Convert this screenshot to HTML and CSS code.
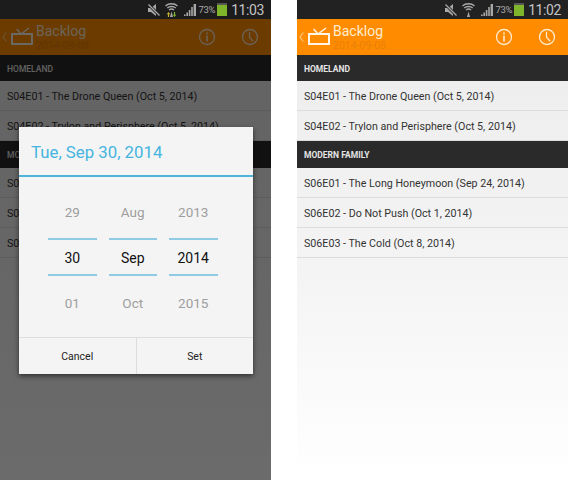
FILE: index.html
```html
<!DOCTYPE html>
<html lang="en">
<head>
<meta charset="utf-8">
<title>Backlog</title>
<link rel="stylesheet" href="styles.css">
</head>
<body>
<svg class="defs" width="0" height="0" aria-hidden="true">
  <symbol id="mute" viewBox="0 0 12 12"><path d="M0 4h3l5-4v12L3 8H0z" fill="currentColor"/><path d="M0.500 0.500L11.500 11.500" stroke="#222" stroke-width="3"/><path d="M0.500 0.500L11.500 11.500" stroke="currentColor" stroke-width="1.200"/></symbol>
  <symbol id="wifi" viewBox="0 0 13 15"><path d="M0.500 4C3.500 1 9.500 1 12.500 4M2.300 6C4.500 4 8.500 4 10.700 6M4 8C5.500 6.800 7.500 6.800 9 8" fill="none" stroke="currentColor" stroke-width="1.300"/><path d="M6.500 9.500l1.500 5.500H5z" fill="currentColor"/></symbol>
  <symbol id="wifi-on" viewBox="0 0 13 15"><path d="M0.500 4C3.500 1 9.500 1 12.500 4M2.300 6C4.500 4 8.500 4 10.700 6M4 8C5.500 6.800 7.500 6.800 9 8" fill="none" stroke="currentColor" stroke-width="1.300"/><path d="M6.500 9.500l1.500 5.500H5z" fill="currentColor"/><path d="M3.500 10l-1.800 2.200h1.200V15h1.200v-2.800h1.200z" fill="#c9b52a"/><path d="M9.500 15l1.800-2.200h-1.200V10H8.900v2.800H7.700z" fill="#7fb52a"/></symbol>
  <symbol id="signal" viewBox="0 0 12 12"><path d="M0 12h1.600v-1.500H0zM2.400 12H4V8.500H2.400zM4.800 12h1.600V6H4.800zM7.200 12h1.600V3H7.200zM9.600 12H12V0H9.600z" fill="currentColor"/></symbol>
  <symbol id="chev" viewBox="0 0 5 10"><path d="M4.300 0.500L1 5l3.300 4.500" fill="none" stroke="currentColor" stroke-width="1.200"/></symbol>
  <symbol id="tv" viewBox="0 0 22 18"><rect x="1" y="7" width="20" height="10" fill="none" stroke="currentColor" stroke-width="2"/><path d="M5.600 2L10 7l8-6" fill="none" stroke="currentColor" stroke-width="1.400"/></symbol>
  <symbol id="info" viewBox="0 0 18 18"><circle cx="9" cy="9" r="7.500" fill="none" stroke="currentColor" stroke-width="1.300"/><rect x="8.200" y="7.500" width="1.600" height="6" fill="currentColor"/><rect x="8.200" y="4.500" width="1.600" height="1.800" fill="currentColor"/></symbol>
  <symbol id="clock" viewBox="0 0 18 18"><circle cx="9" cy="9" r="7.500" fill="none" stroke="currentColor" stroke-width="1.300"/><path d="M8.500 3.800V9.300l3.600 3.900" fill="none" stroke="currentColor" stroke-width="1.300"/></symbol>
</svg>
<main class="screens">
  <section class="phone phone-dim">
    <header class="status">
      <svg class="st-mute"><use href="#mute"/></svg>
      <svg class="st-wifi"><use href="#wifi-on"/></svg>
      <svg class="st-signal"><use href="#signal"/></svg>
      <span class="st-pct">73%</span>
      <span class="st-batt"></span>
      <span class="st-time">11:03</span>
    </header>
    <div class="app">
      <div class="actionbar">
        <svg class="back"><use href="#chev"/></svg>
        <svg class="tv"><use href="#tv"/></svg>
        <div class="titles"><div class="title">Backlog</div><div class="subtitle">2014-09-08</div></div>
        <svg class="act act-info"><use href="#info"/></svg>
        <svg class="act"><use href="#clock"/></svg>
      </div>
      <div class="section">HOMELAND</div>
      <div class="row">S04E01 - The Drone Queen (Oct 5, 2014)</div>
      <div class="row">S04E02 - Trylon and Perisphere (Oct 5, 2014)</div>
      <div class="section">MODERN FAMILY</div>
      <div class="row">S06E01 - The Long Honeymoon (Sep 24, 2014)</div>
      <div class="row">S06E02 - Do Not Push (Oct 1, 2014)</div>
      <div class="row">S06E03 - The Cold (Oct 8, 2014)</div>
      <div class="scrim"></div>
      <div class="dialog">
        <div class="dlg-title">Tue, Sep 30, 2014</div>
        <div class="pickers">
          <div class="col"><div class="val">29</div><div class="val cur">30</div><div class="val">01</div></div>
          <div class="col"><div class="val">Aug</div><div class="val cur">Sep</div><div class="val">Oct</div></div>
          <div class="col"><div class="val">2013</div><div class="val cur">2014</div><div class="val">2015</div></div>
        </div>
        <div class="buttons"><div class="btn">Cancel</div><div class="btn">Set</div></div>
      </div>
    </div>
  </section>
  <section class="phone">
    <header class="status">
      <svg class="st-mute"><use href="#mute"/></svg>
      <svg class="st-wifi"><use href="#wifi"/></svg>
      <svg class="st-signal"><use href="#signal"/></svg>
      <span class="st-pct">73%</span>
      <span class="st-batt"></span>
      <span class="st-time">11:02</span>
    </header>
    <div class="app">
      <div class="actionbar">
        <svg class="back"><use href="#chev"/></svg>
        <svg class="tv"><use href="#tv"/></svg>
        <div class="titles"><div class="title">Backlog</div><div class="subtitle">2014-09-08</div></div>
        <svg class="act act-info"><use href="#info"/></svg>
        <svg class="act"><use href="#clock"/></svg>
      </div>
      <div class="section">HOMELAND</div>
      <div class="row">S04E01 - The Drone Queen (Oct 5, 2014)</div>
      <div class="row">S04E02 - Trylon and Perisphere (Oct 5, 2014)</div>
      <div class="section">MODERN FAMILY</div>
      <div class="row">S06E01 - The Long Honeymoon (Sep 24, 2014)</div>
      <div class="row">S06E02 - Do Not Push (Oct 1, 2014)</div>
      <div class="row">S06E03 - The Cold (Oct 8, 2014)</div>
    </div>
  </section>
</main>
</body>
</html>
```
FILE: styles.css
```css
* { box-sizing: border-box; }
html, body { margin: 0; padding: 0; background: #fff; }
body { width: 568px; height: 480px; overflow: hidden; font-family: Roboto, "Liberation Sans", sans-serif; }
.defs { position: absolute; }
.screens { display: flex; gap: 26px; height: 480px; }
.phone { width: 271px; height: 480px; display: flex; flex-direction: column; }

.status { height: 19px; flex: none; background: #222; color: #a8a8a8; display: flex; align-items: center; padding-right: 7px; }
.phone-dim .status { background: #1c1c1c; }
.st-mute { width: 12px; height: 12px; margin-left: auto; }
.st-wifi { width: 13px; height: 15px; margin-left: 5px; }
.st-signal { width: 12px; height: 12px; margin-left: 6px; }
.st-pct { font-size: 9.500px; margin-left: 2px; letter-spacing: -0.300px; }
.st-batt { width: 10px; height: 13px; margin-left: 2px; background: #7fb52a; border-top: 2px solid #555; }
.st-time { font-size: 14px; margin-left: 4px; letter-spacing: -0.400px; color: #c4c4c4; }

.app { position: relative; flex: 1; background: linear-gradient(#ececec 0, #f4f4f4 55%, #fff 100%); }
.actionbar { height: 36px; background: #ff8c00; color: #fff; display: flex; align-items: center; }
.back { width: 5px; height: 10px; margin: 0 4px 0 2px; color: #ffc680; }
.tv { width: 22px; height: 18px; margin-top: -2px; color: #fff5e6; }
.titles { margin: 1px 0 0 3px; flex: 1; }
.title { font-size: 14px; line-height: 16px; color: #ffeccf; }
.subtitle { font-size: 10.500px; line-height: 13px; color: #e9810a; }
.act { width: 18px; height: 18px; margin-right: 12px; color: #ffe9cc; }
.act-info { margin-right: 25px; }

.section { height: 26px; background: #2a2a2a; color: #e4e4e4; font-size: 8.500px; font-weight: 700; line-height: 28px; padding-left: 7px; }
.row + .section { height: 27px; }
.row { height: 30px; font-size: 10.700px; line-height: 29px; padding-top: 1px; color: #333; padding-left: 7px; border-bottom: 1px solid #dcdcdc; }

.phone-dim .section { font-weight: 500; }
.scrim { position: absolute; inset: 0; background: rgba(0, 0, 0, 0.58); }

.dialog { position: absolute; left: 19px; top: 108px; width: 234px; height: 247px; background: #f4f4f4; box-shadow: 0 2px 5px rgba(0, 0, 0, 0.55); display: flex; flex-direction: column; }
.dlg-title { height: 50px; flex: none; border-bottom: 2px solid #4db4dc; color: #45b4e0; font-size: 16.800px; line-height: 50px; padding-left: 12px; }
.pickers { flex: 1; display: flex; gap: 12px; padding: 13px 0 0 29px; }
.col { width: 48.500px; }
.val { height: 45px; font-size: 13.500px; line-height: 45px; text-align: center; color: #9e9e9e; }
.cur { height: 38px; line-height: 36px; margin: 3px 0 5px; color: #111; font-size: 14px; border-top: 2px solid #8fcbe3; border-bottom: 2px solid #8fcbe3; }
.buttons { height: 37px; flex: none; display: flex; border-top: 1px solid #ddd; }
.btn { flex: 1; font-size: 10.500px; line-height: 37px; text-align: center; color: #222; }
.btn + .btn { border-left: 1px solid #ddd; }
```
